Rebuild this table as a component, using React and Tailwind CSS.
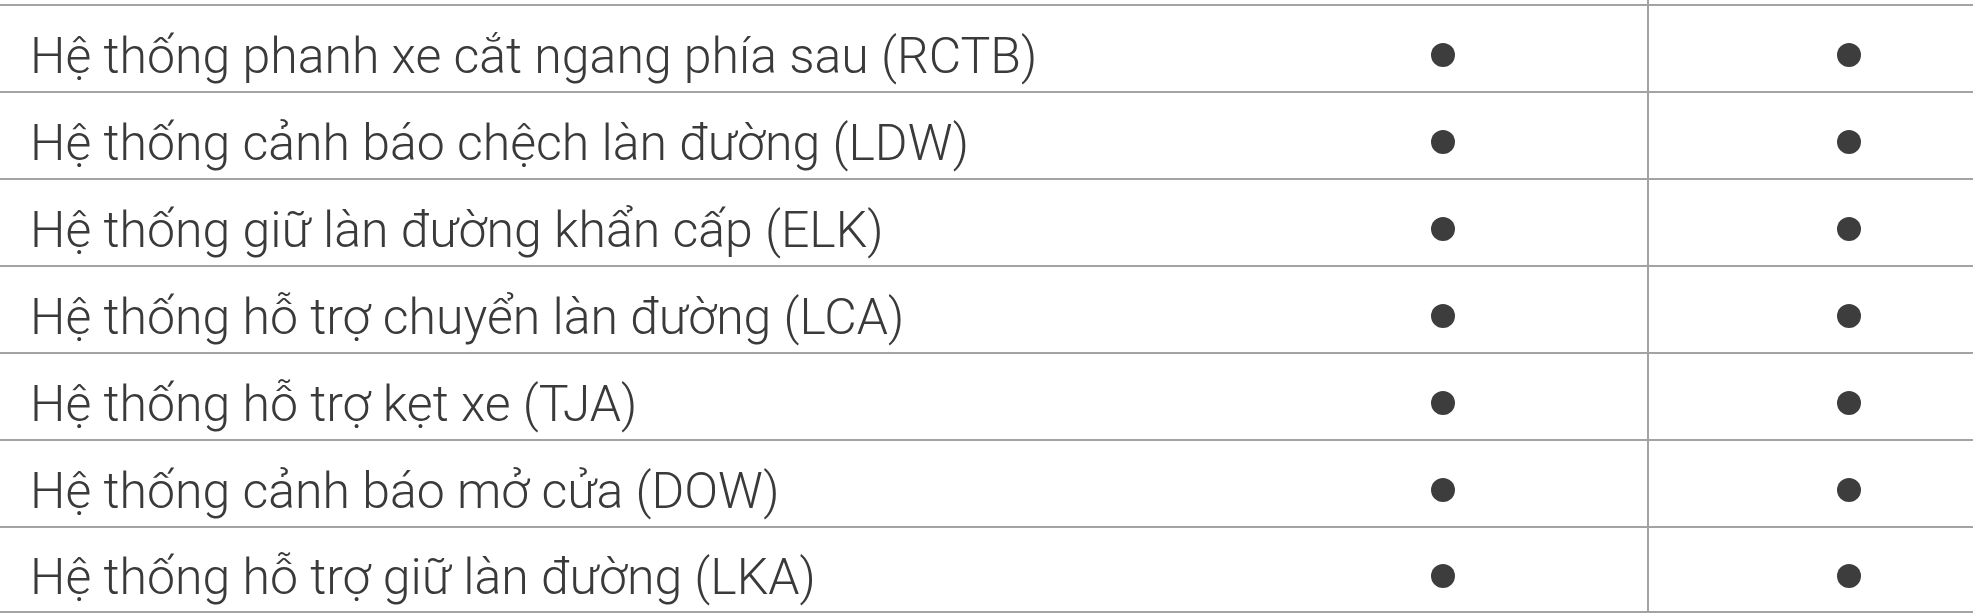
const rows = [
  'Hệ thống phanh xe cắt ngang phía sau (RCTB)',
  'Hệ thống cảnh báo chệch làn đường (LDW)',
  'Hệ thống giữ làn đường khẩn cấp (ELK)',
  'Hệ thống hỗ trợ chuyển làn đường (LCA)',
  'Hệ thống hỗ trợ kẹt xe (TJA)',
  'Hệ thống cảnh báo mở cửa (DOW)',
  'Hệ thống hỗ trợ giữ làn đường (LKA)',
];

const Dot = () => <div className="w-[24px] h-[24px] rounded-full bg-[#3d3d3d] mt-3" />;

export default function App() {
  return (
    <div className="w-[1973px] overflow-hidden bg-white" style={{ fontFamily: 'Roboto, "Noto Sans", sans-serif' }}>
      <div className="w-[2049px]">
        <div className="grid grid-cols-[1238px_409px_402px] h-[4px]">
          <div />
          <div />
          <div className="border-l-2 border-[#a3a3a3]" />
        </div>
        {rows.map((label, i) => (
          <div
            key={label}
            className={`grid grid-cols-[1238px_409px_402px] h-[87px] border-t-2 border-[#a3a3a3] ${i === rows.length - 1 ? 'border-b-2' : ''}`}
          >
            <div className="flex items-center pl-[30px] pt-[14px] text-[50px] font-light text-[#3a3a3a] leading-none whitespace-nowrap">
              {label}
            </div>
            <div className="flex items-center justify-center">
              <Dot />
            </div>
            <div className="flex items-center justify-center border-l-2 border-[#a3a3a3]">
              <Dot />
            </div>
          </div>
        ))}
      </div>
    </div>
  );
}
